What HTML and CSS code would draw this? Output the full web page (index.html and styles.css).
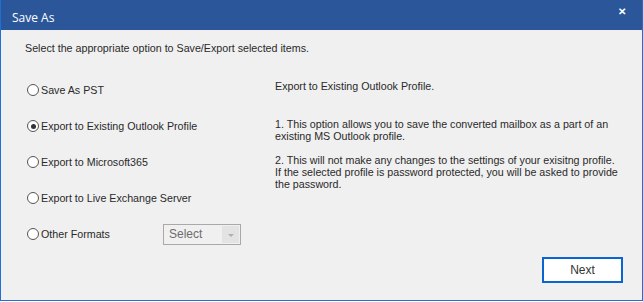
FILE: index.html
```html
<!DOCTYPE html>
<html lang="en">

<head>
    <meta charset="UTF-8">
    <title>Save As</title>
    <link rel="stylesheet" href="styles.css">
</head>

<body>
    <div class="window">
        <div class="titlebar">
            <span class="title">Save As</span>
            <span class="close-btn">&#x2715;</span>
        </div>
        <div class="content">
            <div class="heading">Select the appropriate option to Save/Export selected items.</div>
            <div class="main">
                <div class="options">
                    <label class="option"><span class="radio"></span>Save As PST</label>
                    <label class="option"><span class="radio checked"></span>Export to Existing Outlook Profile</label>
                    <label class="option"><span class="radio"></span>Export to Microsoft365</label>
                    <label class="option"><span class="radio"></span>Export to Live Exchange Server</label>
                    <div class="option">
                        <label class="option-label"><span class="radio"></span>Other Formats</label>
                        <div class="select-box">
                            <span class="select-text">Select</span>
                            <span class="select-arrow"></span>
                        </div>
                    </div>
                </div>
                <div class="description">
                    <p class="desc-title">Export to Existing Outlook Profile.</p>
                    <p class="desc-para">1. This option allows you to save the converted mailbox as a part of an<br>existing MS Outlook profile.</p>
                    <p class="desc-para">2. This will not make any changes to the settings of your exisitng profile.<br>If the selected profile is password protected, you will be asked to provide<br>the password.</p>
                </div>
            </div>
            <div class="footer">
                <button class="next-button">Next</button>
            </div>
        </div>
    </div>
</body>

</html>
```

FILE: styles.css
```css
body {
    margin: 0;
    background-color: #ffffff;
    font-family: 'Liberation Sans', Arial, sans-serif;
}

.window {
    width: 643px;
    height: 301px;
    box-sizing: border-box;
    border: 1px solid #1f6fd4;
    border-top: none;
    background-color: #f0f0f0;
    display: flex;
    flex-direction: column;
}

.titlebar {
    height: 30px;
    flex-shrink: 0;
    background-color: #2b579a;
    color: #ffffff;
    display: flex;
    align-items: center;
    justify-content: space-between;
    padding: 0 16px 0 11px;
    margin: 0 -1px;
    border-left: 1px solid #1f6fd4;
    border-right: 1px solid #1f6fd4;
}

.title {
    font-family: 'Open Sans', 'Noto Sans', sans-serif;
    font-size: 12px;
    margin-top: 4px;
}

.close-btn {
    font-size: 10px;
    font-weight: bold;
    margin-top: -8px;
}

.content {
    flex: 1;
    display: flex;
    flex-direction: column;
    padding: 12px 19px 17px 24px;
    font-size: 10.7px;
    color: #2a2a2a;
}

.heading {
    line-height: 13px;
}

.main {
    display: flex;
    margin-top: 17px;
}

.options {
    width: 250px;
    display: flex;
    flex-direction: column;
}

.option,
.option-label {
    height: 36px;
    display: flex;
    align-items: center;
}

.radio {
    width: 12px;
    height: 12px;
    border: 1px solid #555555;
    border-radius: 50%;
    background-color: #ffffff;
    margin: 0 2px 0 2px;
    box-sizing: border-box;
    position: relative;
}

.radio.checked::after {
    content: '';
    position: absolute;
    left: 2.5px;
    top: 2.5px;
    width: 5px;
    height: 5px;
    border-radius: 50%;
    background-color: #333333;
}

.option-label {
    width: 138px;
}

.select-box {
    width: 78px;
    height: 21px;
    box-sizing: border-box;
    border: 1px solid #a9a9a9;
    background-color: #f0f0f0;
    display: flex;
    padding: 1px;
}

.select-text {
    flex: 1;
    color: #6d6d6d;
    font-size: 12px;
    line-height: 17px;
    padding-left: 4px;
}

.select-arrow {
    width: 17px;
    background-color: #e3e3e3;
    position: relative;
}

.select-arrow::after {
    content: '';
    position: absolute;
    left: 6px;
    top: 8px;
    border-left: 3px solid transparent;
    border-right: 3px solid transparent;
    border-top: 3px solid #b0b0b0;
}

.description {
    flex: 1;
    padding-top: 8px;
    line-height: 12px;
    white-space: nowrap;
}

.description p {
    margin: 0;
}

.desc-title {
    margin-bottom: 26px !important;
}

.desc-para {
    margin-bottom: 12px !important;
}

.footer {
    margin-top: auto;
    display: flex;
    justify-content: flex-end;
}

.next-button {
    width: 81px;
    height: 26px;
    background-color: #ffffff;
    border: 2px solid #0a64d2;
    font-family: 'Liberation Sans', Arial, sans-serif;
    font-size: 12px;
    color: #333333;
    padding: 0;
}
```
